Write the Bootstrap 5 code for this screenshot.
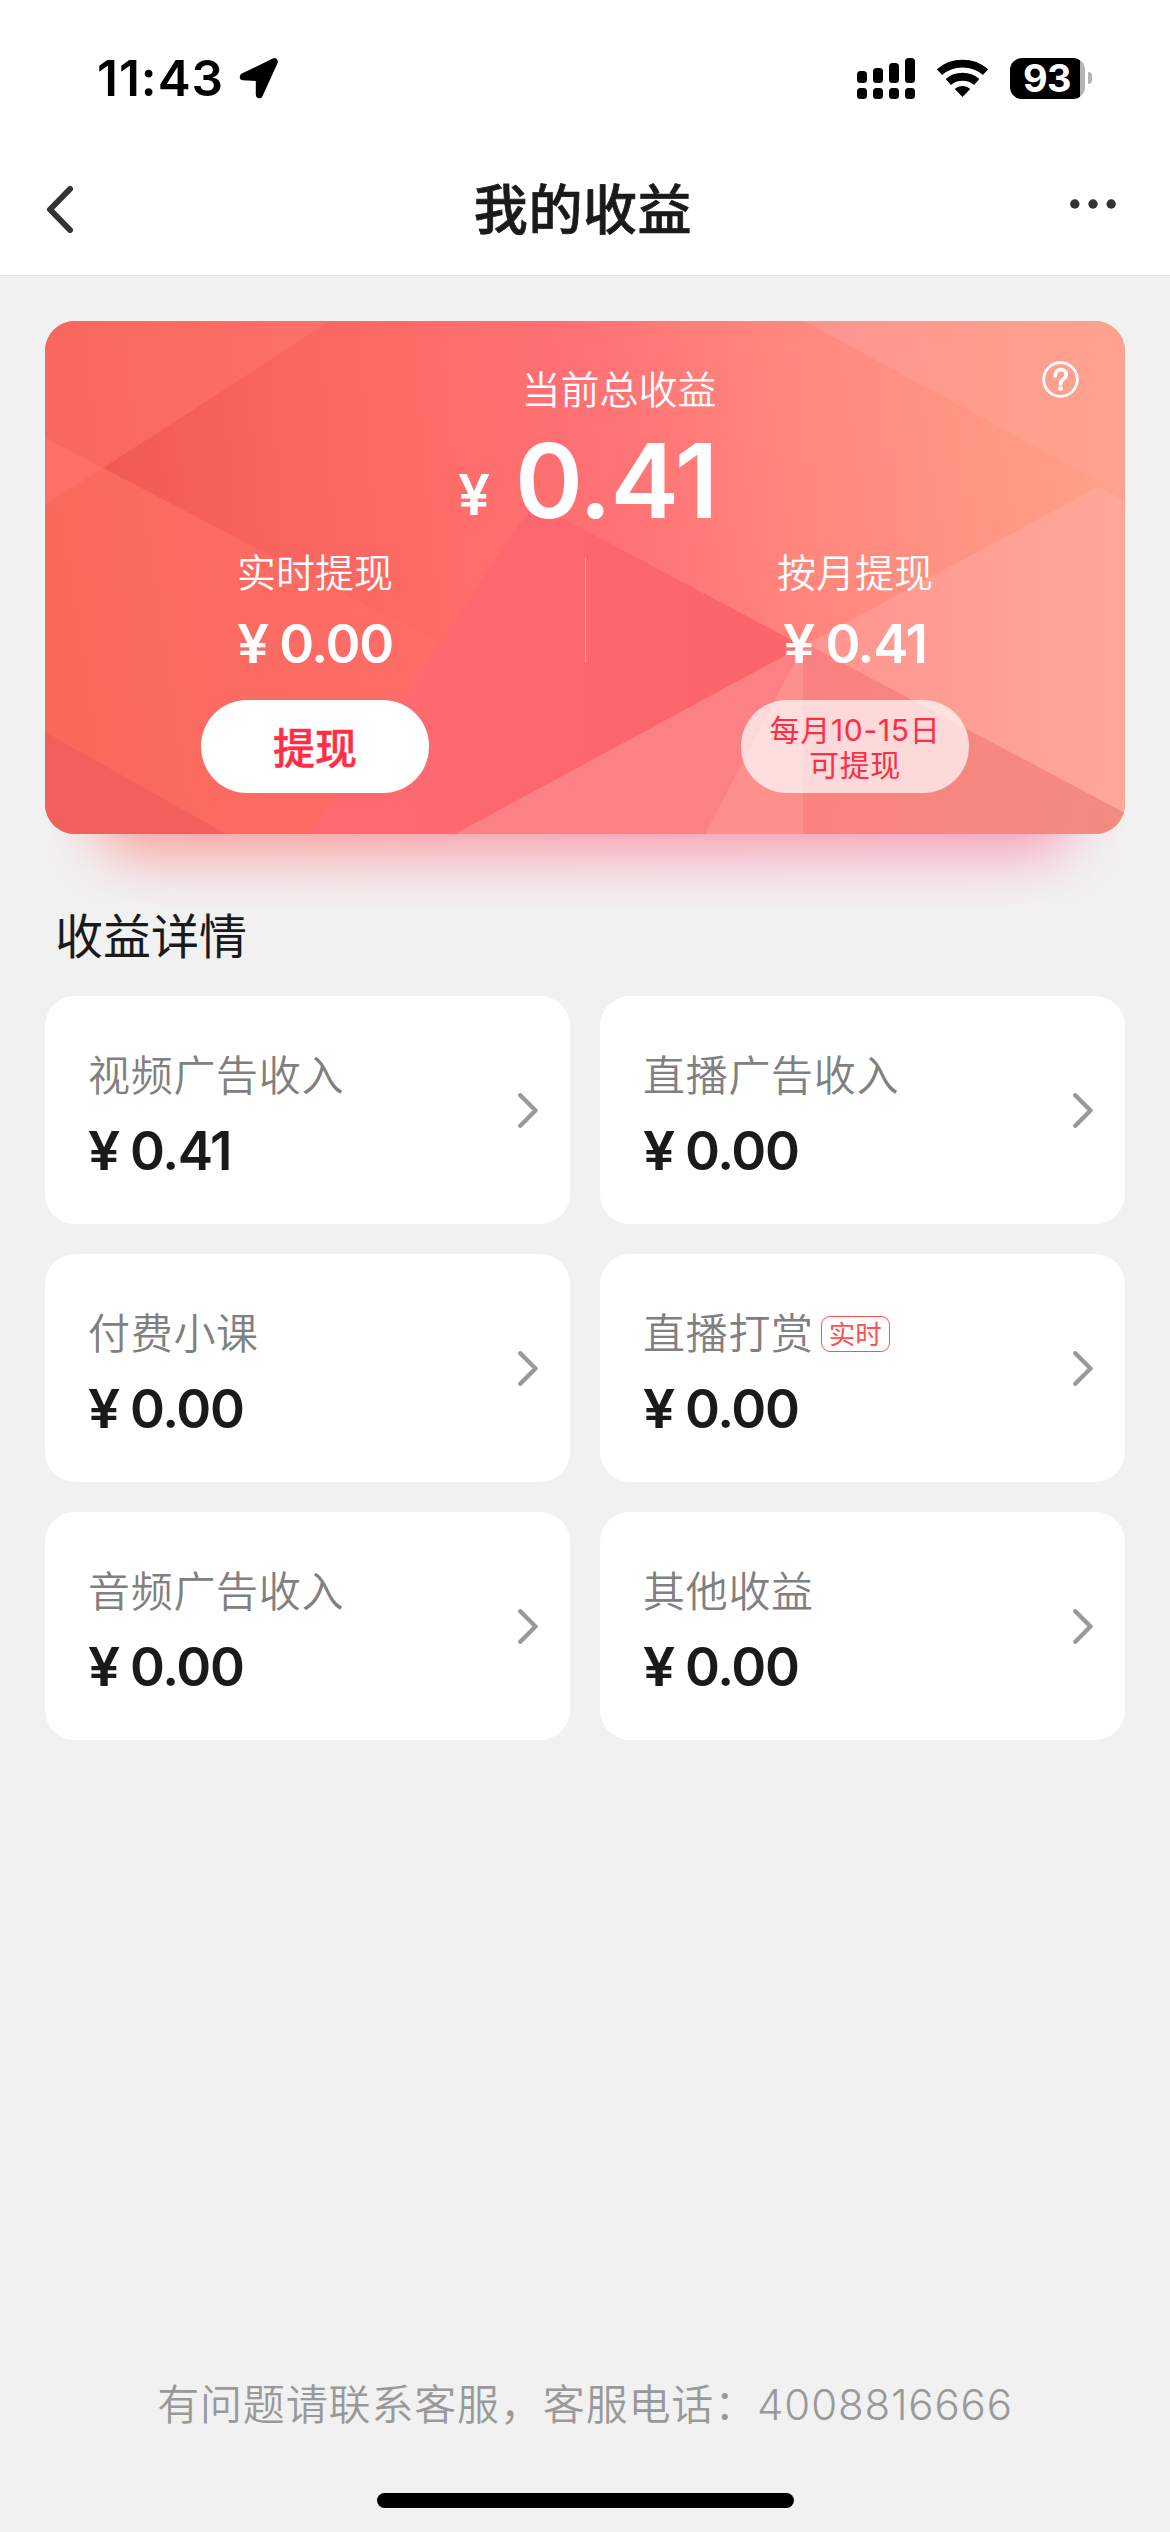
<!DOCTYPE html>
<html lang="zh-CN">
<head>
<meta charset="utf-8">
<meta name="viewport" content="width=device-width, initial-scale=1">
<title>我的收益</title>
<link href="https://cdn.jsdelivr.net/npm/bootstrap@5.3.0/dist/css/bootstrap.min.css" rel="stylesheet">
<style>
body{background:#f1f1f1;color:#1a1a1a;font-family:Inter,"Noto Sans CJK SC",sans-serif;min-height:2532px;overflow-x:hidden}
svg{display:block;flex:none}
.top-area{height:276px;border-bottom:1px solid #e4e4e4}
.status-bar{height:156px;padding:0 78px 0 97px;color:#000}
.clock{font-size:49.5px;font-weight:600;line-height:60px;letter-spacing:1px;width:142px}
.icon-wifi{margin:0 22px}
.battery-level{font-size:38px;font-weight:700;line-height:41px;width:75px;height:41px;border-radius:12px;letter-spacing:-.5px;color:#fff;background:linear-gradient(90deg,#000 70px,#b3b3b3 70px);padding-right:1px}
.battery-tip{width:4px;height:12px;margin-left:3px;border-radius:0 4px 4px 0;background:#b3b3b3}
.nav-area{height:106px;padding:0 54px 0 46px}
.page-title{font-size:54px;font-weight:500;line-height:60px;letter-spacing:.6px;-webkit-text-stroke:.7px #1a1a1a;padding:4px 14px 0 0}
.hero{height:587px;margin:45px 45px 0;overflow:hidden}
.hero-panel{height:513px;border-radius:30px;color:#fff;isolation:isolate}
.hero-shadow{z-index:-1}
.hero-art{z-index:-1;border-radius:30px}
.hero-label{font-size:39px;line-height:47px;font-weight:350}
.total-label{padding:45px 0 0 68px}
.total-amount{height:110px;margin-top:13px;padding-left:5px}
.total-yen{font-size:57px;font-weight:600;line-height:110px;margin-right:25px;padding-top:14px}
.total-num{font-size:103px;font-weight:600;line-height:110px;letter-spacing:-1.2px}
.sum{font-size:53px;font-weight:600;line-height:60px;letter-spacing:-1.3px}
.yen{display:inline-block;width:42px;letter-spacing:0;transform:scaleX(1.08);transform-origin:0 50%}
.withdraw-row{margin-top:13px}
.withdraw-col{width:540px}
.withdraw-col .sum{margin-top:18px}
.divider{width:1px;height:105px;background:rgba(255,255,255,.4);margin:9px -1px 0 0}
.pill{width:228px;height:93px;border-radius:46px;margin-top:26px;border:0;color:#ff2d46}
.pill-main{background:#fff;font-size:42px;font-weight:500;padding:3px 0 0;-webkit-text-stroke:.5px #ff2d46}
.pill-soft{background:rgba(255,255,255,.7);font-size:30px;line-height:35px;letter-spacing:.7px;padding:2px 0 0}
.help{top:40px;right:46px}
.section-title{font-size:48px;line-height:60px;margin:-1px 0 29px 55px}
.tiles{display:grid;grid-template-columns:1fr 1fr;gap:30px;padding:0 45px}
.tile{height:228px;border-radius:30px;padding:55px 32px 0 43px;border:0}
.tile-label{font-size:42px;line-height:50px;letter-spacing:.7px;color:#808080;margin-bottom:20px;font-weight:350}
.tag-live{font-size:26.5px;line-height:34px;width:69px;height:36px;border:1px solid #ff5050;border-radius:9px;color:#ff5050;margin-left:7px;letter-spacing:0;font-weight:400}
.tile .arrow{margin-top:42px}
.contact{font-size:42px;line-height:60px;letter-spacing:.85px;color:#999;font-weight:350}
.home-bar{width:417px;height:15px;border-radius:8px;background:#000;margin:58px auto 24px}
</style>
</head>
<body class="d-flex flex-column">
<header class="top-area bg-white">
  <div class="status-bar d-flex align-items-center">
    <span class="clock">11:43</span>
    <svg width="40" height="41" viewBox="0 0 40 41"><path d="M4 19 35 4 20 37V20Z" stroke="#000" stroke-width="7" stroke-linejoin="round" transform="translate(.3 -.3)"/></svg>
    <div class="d-flex align-items-center ms-auto">
      <svg width="58" height="41" viewBox="0 0 58 41"><rect y="13" width="10" height="12" rx="3.5"/><rect x="16" y="10" width="10" height="15" rx="3.5"/><rect x="32" y="5" width="10" height="20" rx="3.5"/><rect x="48" width="10" height="25" rx="3.5"/><rect y="30" width="10" height="11" rx="3.5"/><rect x="16" y="30" width="10" height="11" rx="3.5"/><rect x="32" y="30" width="10" height="11" rx="3.5"/><rect x="48" y="30" width="10" height="11" rx="3.5"/></svg>
      <svg class="icon-wifi" width="51" height="41" viewBox="0 0 51 41"><g fill="none" stroke="#000" stroke-width="7.8"><path d="M2.500 14.200C15 2.800 36 2.800 48.500 14.200"/><path d="M11.300 24C19 17 32 17 39.700 24"/></g><path d="M17.800 31C22 27 29 27 33.200 31L25.500 39Z"/></svg>
      <span class="battery-level text-center">93</span><span class="battery-tip"></span>
    </div>
  </div>
  <nav class="nav-area d-flex align-items-center justify-content-between">
    <svg width="64" height="48" viewBox="0 0 64 48"><path d="M24 4 4 24.500 24 45" fill="none" stroke="#333" stroke-width="6" stroke-linecap="round" stroke-linejoin="round"/></svg>
    <h1 class="page-title m-0">我的收益</h1>
    <svg width="46" height="20" viewBox="0 0 46 20" fill="#333"><circle cx="4.800" cy="5" r="4.700"/><circle cx="23" cy="5" r="4.700"/><circle cx="41.200" cy="5" r="4.700"/></svg>
  </nav>
</header>

<main class="d-flex flex-column flex-grow-1">
  <section class="hero position-relative">
    <svg class="hero-shadow position-absolute top-0 start-0" width="1080" height="587" viewBox="0 0 1080 587">
      <defs><filter id="soft" x="-20%" y="-20%" width="140%" height="150%"><feGaussianBlur stdDeviation="29"/></filter><linearGradient id="sh"><stop stop-color="#f98f87"/><stop offset=".55" stop-color="#fa8c9f"/><stop offset="1" stop-color="#fa8ead"/></linearGradient></defs>
      <rect x="52" y="200" width="976" height="331" rx="40" fill="url(#sh)" filter="url(#soft)" opacity=".9"/>
    </svg>
    <div class="hero-panel position-relative">
      <svg class="hero-art position-absolute top-0 start-0" width="1080" height="513" viewBox="45 321 1080 513">
        <defs>
          <linearGradient id="base" gradientUnits="userSpaceOnUse" x1="45" y1="650" x2="1125" y2="480"><stop stop-color="#f8695b"/><stop offset=".36" stop-color="#fe6d68"/><stop offset=".52" stop-color="#ff7074"/><stop offset=".7" stop-color="#ff867d"/><stop offset="1" stop-color="#ffa28a"/></linearGradient>
          <linearGradient id="dark" gradientUnits="userSpaceOnUse" x1="103" y1="468" x2="470" y2="440"><stop stop-color="#ee524f" stop-opacity=".75"/><stop offset="1" stop-color="#f95f60" stop-opacity="0"/></linearGradient>
          <linearGradient id="topl" gradientUnits="userSpaceOnUse" x1="45" y1="380" x2="300" y2="350"><stop stop-color="#f8675d"/><stop offset="1" stop-color="#fd7067"/></linearGradient>
          <linearGradient id="pink" gradientUnits="userSpaceOnUse" x1="400" y1="650" x2="800" y2="650"><stop stop-color="#fe6a70"/><stop offset=".45" stop-color="#fc666f"/><stop offset="1" stop-color="#f96568"/></linearGradient>
          <linearGradient id="rdark" gradientUnits="userSpaceOnUse" x1="803" y1="700" x2="1125" y2="800"><stop stop-color="#fa8182"/><stop offset="1" stop-color="#f38b80"/></linearGradient>
          <linearGradient id="right" gradientUnits="userSpaceOnUse" x1="803" y1="640" x2="1125" y2="640"><stop stop-color="#ff9490"/><stop offset="1" stop-color="#ffa898"/></linearGradient>
          <linearGradient id="rtop" gradientUnits="userSpaceOnUse" x1="820" y1="400" x2="1125" y2="400"><stop stop-color="#ff9490"/><stop offset=".5" stop-color="#ff9d8d"/><stop offset="1" stop-color="#ffa290"/></linearGradient>
        </defs>
        <rect x="45" y="321" width="1080" height="513" fill="url(#base)"/>
        <path d="M45 321H330L103 468 45 438Z" fill="url(#topl)"/>
        <path d="M45 438 103 468 45 505Z" fill="#fe7067"/>
        <path d="M330 321H560L480 665 103 468Z" fill="url(#dark)"/>
        <path d="M45 732 226 834H45Z" fill="#f1605d"/>
        <path d="M534 503 803 646 455 834H310Z" fill="url(#pink)"/>
        <path d="M804 321H1125V495Z" fill="url(#rtop)"/>
        <path d="M803 646 1098 487 1125 501V834H803Z" fill="url(#right)"/>
        <path d="M803 646 705 834H455Z" fill="#fc8184"/>
        <path d="M803 646V834H705Z" fill="#fd8f8c"/>
        <path d="M803 642 1125 813V834H803Z" fill="url(#rdark)"/>
      </svg>
      <svg class="help position-absolute" width="37" height="37" viewBox="0 0 37 37" fill="none" stroke="#fff" stroke-width="2.800"><circle cx="18.500" cy="18.500" r="16.800"/><path d="M13.300 14.700C13.300 6.500 24.300 7 24.300 13.700 24.300 18 18.500 17.500 18.500 23" stroke-width="3.800" stroke-linecap="round"/><circle cx="18.500" cy="27.600" r="2.400" fill="#fff" stroke="none"/></svg>
      <div class="hero-label total-label text-center">当前总收益</div>
      <div class="total-amount d-flex justify-content-center"><span class="total-yen">¥</span><span class="total-num">0.41</span></div>
      <div class="withdraw-row d-flex">
        <div class="withdraw-col d-flex flex-column align-items-center">
          <div class="hero-label">实时提现</div>
          <div class="sum"><span class="yen">¥</span>0.00</div>
          <button class="pill pill-main">提现</button>
        </div>
        <div class="divider"></div>
        <div class="withdraw-col d-flex flex-column align-items-center">
          <div class="hero-label">按月提现</div>
          <div class="sum"><span class="yen">¥</span>0.41</div>
          <button class="pill pill-soft">每月10-15日<br>可提现</button>
        </div>
      </div>
    </div>
  </section>

  <h2 class="section-title fw-normal">收益详情</h2>
  <section class="tiles">
    <div class="tile bg-white d-flex justify-content-between"><div><div class="tile-label">视频广告收入</div><div class="sum"><span class="yen">¥</span>0.41</div></div><svg class="arrow" width="20" height="35" viewBox="0 0 20 35"><path d="M2.300 2.300 17.500 17.500 2.300 32.700" fill="none" stroke="#999" stroke-width="4.400" stroke-linecap="round" stroke-linejoin="round"/></svg></div>
    <div class="tile bg-white d-flex justify-content-between"><div><div class="tile-label">直播广告收入</div><div class="sum"><span class="yen">¥</span>0.00</div></div><svg class="arrow" width="20" height="35" viewBox="0 0 20 35"><path d="M2.300 2.300 17.500 17.500 2.300 32.700" fill="none" stroke="#999" stroke-width="4.400" stroke-linecap="round" stroke-linejoin="round"/></svg></div>
    <div class="tile bg-white d-flex justify-content-between"><div><div class="tile-label">付费小课</div><div class="sum"><span class="yen">¥</span>0.00</div></div><svg class="arrow" width="20" height="35" viewBox="0 0 20 35"><path d="M2.300 2.300 17.500 17.500 2.300 32.700" fill="none" stroke="#999" stroke-width="4.400" stroke-linecap="round" stroke-linejoin="round"/></svg></div>
    <div class="tile bg-white d-flex justify-content-between"><div><div class="tile-label d-flex align-items-center">直播打赏<span class="tag-live text-center">实时</span></div><div class="sum"><span class="yen">¥</span>0.00</div></div><svg class="arrow" width="20" height="35" viewBox="0 0 20 35"><path d="M2.300 2.300 17.500 17.500 2.300 32.700" fill="none" stroke="#999" stroke-width="4.400" stroke-linecap="round" stroke-linejoin="round"/></svg></div>
    <div class="tile bg-white d-flex justify-content-between"><div><div class="tile-label">音频广告收入</div><div class="sum"><span class="yen">¥</span>0.00</div></div><svg class="arrow" width="20" height="35" viewBox="0 0 20 35"><path d="M2.300 2.300 17.500 17.500 2.300 32.700" fill="none" stroke="#999" stroke-width="4.400" stroke-linecap="round" stroke-linejoin="round"/></svg></div>
    <div class="tile bg-white d-flex justify-content-between"><div><div class="tile-label">其他收益</div><div class="sum"><span class="yen">¥</span>0.00</div></div><svg class="arrow" width="20" height="35" viewBox="0 0 20 35"><path d="M2.300 2.300 17.500 17.500 2.300 32.700" fill="none" stroke="#999" stroke-width="4.400" stroke-linecap="round" stroke-linejoin="round"/></svg></div>
  </section>
  <footer class="mt-auto text-center">
    <div class="contact">有问题请联系客服，客服电话：4008816666</div>
    <div class="home-bar"></div>
  </footer>
</main>
<script src="https://cdn.jsdelivr.net/npm/bootstrap@5.3.0/dist/js/bootstrap.bundle.min.js"></script>
</body>
</html>
